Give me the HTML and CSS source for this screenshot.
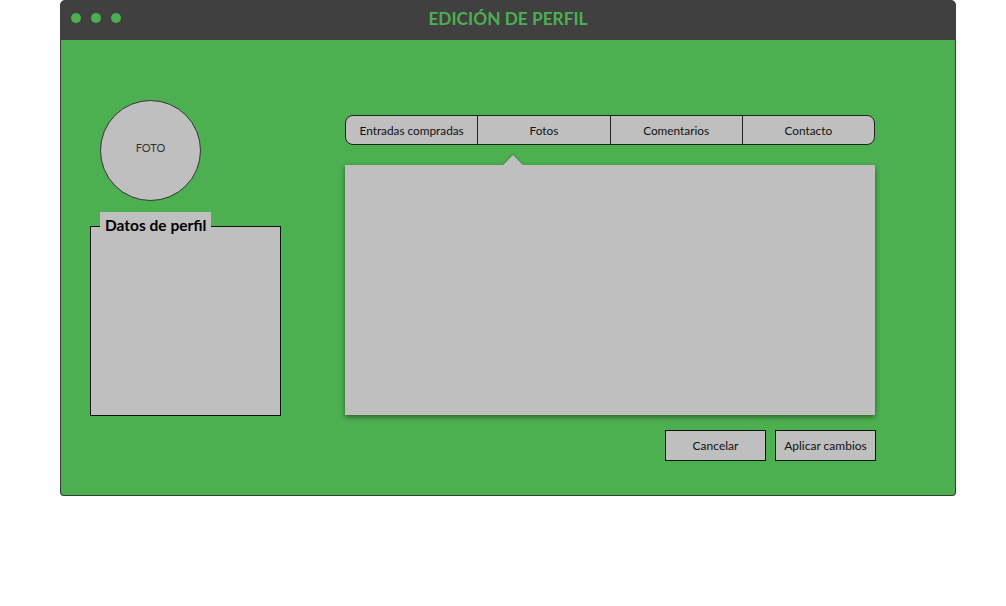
FILE: index.html
```html
<!DOCTYPE html>
<html lang="es">
<head>
<meta charset="utf-8">
<title>Edición de perfil</title>
<link rel="stylesheet" href="styles.css">
</head>
<body>
<div class="window">
  <div class="titlebar">
    <div class="dots"><span class="dot"></span><span class="dot"></span><span class="dot"></span></div>
    <div class="title">EDICIÓN DE PERFIL</div>
  </div>
  <div class="content">
    <div class="left">
      <div class="photo">FOTO</div>
      <div class="profile-box">
        <div class="profile-label">Datos de perfil</div>
      </div>
    </div>
    <div class="right">
      <div class="tabs">
        <div class="tab">Entradas compradas</div>
        <div class="tab">Fotos</div>
        <div class="tab">Comentarios</div>
        <div class="tab">Contacto</div>
      </div>
      <div class="panel"></div>
      <div class="actions">
        <button class="btn">Cancelar</button>
        <button class="btn">Aplicar cambios</button>
      </div>
    </div>
  </div>
</div>
</body>
</html>
```
FILE: styles.css
```css
html, body {
  margin: 0;
  padding: 0;
  background: #ffffff;
}
body {
  font-family: "Lato", "Open Sans", sans-serif;
  color: #222;
}
.window {
  margin-left: 60px;
  width: 896px;
  height: 496px;
  display: flex;
  flex-direction: column;
}
.titlebar {
  height: 40px;
  background: #404040;
  border-radius: 5px 5px 0 0;
  position: relative;
  display: flex;
  align-items: center;
}
.dots {
  display: flex;
  gap: 10px;
  padding-left: 11px;
  margin-top: -4px;
}
.dot {
  width: 10px;
  height: 10px;
  border-radius: 50%;
  background: #4caf50;
}
.title {
  position: absolute;
  left: 0;
  right: 0;
  top: 8px;
  text-align: center;
  color: #4caf50;
  font-weight: 700;
  font-size: 17.3px;
}
.content {
  flex: 1;
  background: #4caf50;
  border: 1px solid #3a3a3a;
  border-top: none;
  border-radius: 0 0 4px 4px;
  display: flex;
  gap: 64px;
  padding-left: 29px;
}
.left {
  width: 191px;
  display: flex;
  flex-direction: column;
}
.photo {
  margin-top: 60px;
  margin-left: 10px;
  width: 99px;
  height: 93px;
  padding-bottom: 6px;
  border: 1px solid #333;
  border-radius: 50%;
  background: #bfbfbf;
  display: flex;
  align-items: center;
  justify-content: center;
  font-size: 11px;
  color: #333;
  box-sizing: content-box;
}
.profile-box {
  margin-top: 25px;
  height: 188px;
  border: 1px solid #111;
  background: #bfbfbf;
  position: relative;
}
.profile-label {
  position: absolute;
  top: -15px;
  left: 9px;
  background: #bfbfbf;
  padding: 0 5px;
  height: 15px;
  line-height: 26px;
  font-weight: 700;
  font-size: 15.5px;
  color: #000;
}
.right {
  width: 531px;
  display: flex;
  flex-direction: column;
  padding-top: 75px;
}
.tabs {
  display: flex;
  height: 28px;
  border: 1px solid #222;
  border-radius: 8px;
  background: #bfbfbf;
  overflow: hidden;
  width: 528px;
}
.tab {
  flex: 1;
  display: flex;
  align-items: center;
  justify-content: center;
  font-size: 11.8px;
  color: #111;
  border-left: 1px solid #222;
}
.tab:first-child {
  border-left: none;
}
.panel {
  margin-top: 20px;
  width: 530px;
  height: 250px;
  background: #bfbfbf;
  position: relative;
  box-shadow: 0 2px 5px rgba(0, 0, 0, 0.45);
}
.panel::before {
  content: "";
  position: absolute;
  left: 161px;
  top: -7px;
  width: 14px;
  height: 14px;
  background: #bfbfbf;
  transform: rotate(45deg);
  box-shadow: -1px -1px 2px rgba(0, 0, 0, 0.2);
}
.panel::after {
  content: "";
  position: absolute;
  left: 150px;
  top: 0;
  width: 40px;
  height: 10px;
  background: #bfbfbf;
}
.actions {
  margin-top: 15px;
  display: flex;
  justify-content: flex-end;
  gap: 9px;
}
.btn {
  width: 101px;
  height: 31px;
  border: 1px solid #111;
  background: #bfbfbf;
  font-family: "Lato", "Open Sans", sans-serif;
  font-size: 12px;
  color: #111;
  padding: 0;
  margin: 0;
}
```
